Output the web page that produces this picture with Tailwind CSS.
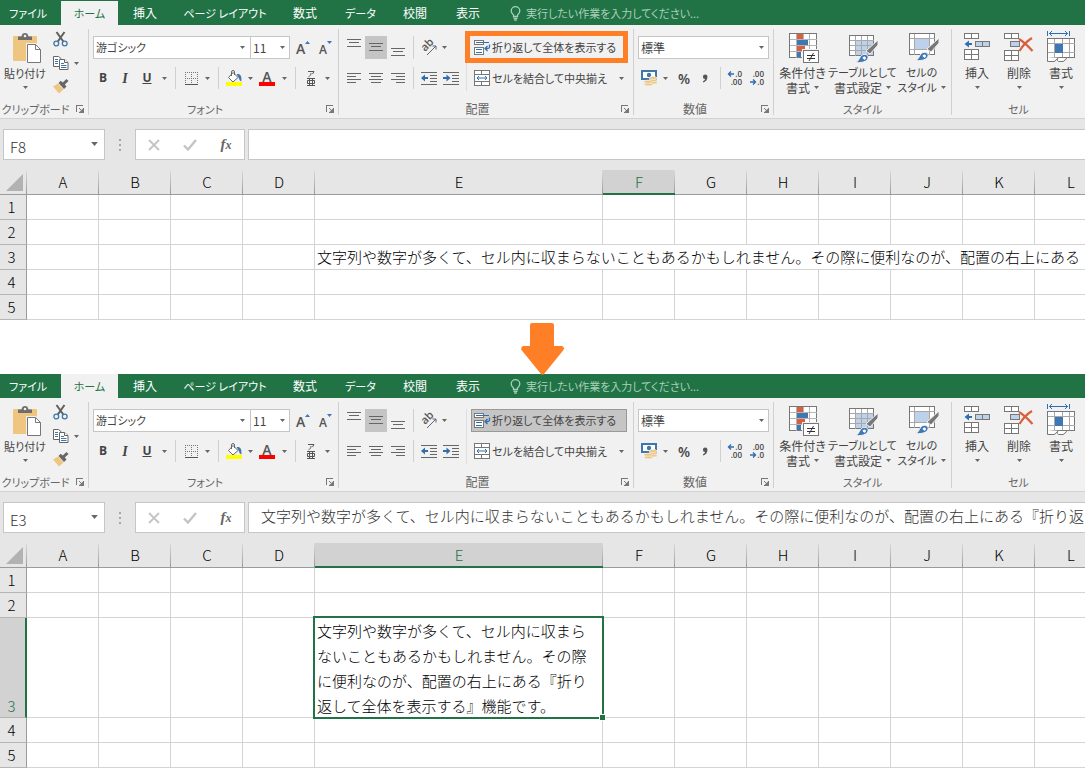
<!DOCTYPE html>
<html lang="ja">
<head>
<meta charset="utf-8">
<meta name="viewport" content="width=device-width, initial-scale=1">
<title>折り返して全体を表示する</title>
<script src="https://cdn.jsdelivr.net/npm/@tailwindcss/browser@4"></script>
</head>
<body class="bg-white overflow-x-hidden font-['Noto_Sans_CJK_JP',sans-serif] text-black">

<!-- Shared icon shapes -->
<svg class="hidden" aria-hidden="true">
  <symbol id="i-drop" viewBox="0 0 5 3"><path d="M0 0h5L2.500 3z" fill="#666"/></symbol>
  <symbol id="i-launch" viewBox="0 0 8 8"><g shape-rendering="crispEdges"><path d="M.5 7V.5H7" fill="none" stroke="#777"/><path d="M7.500 3v4.500H3" fill="none" stroke="#777"/></g><path d="M3 3l3 3" stroke="#777"/><path d="M7 3.500V7H3.500z" fill="#777"/></symbol>
</svg>

<!-- Tabs and ribbon, used by both windows -->
<template id="ribbon">
  <nav class="flex h-6 bg-[#217346] text-white text-[12px] leading-6 whitespace-nowrap [font-feature-settings:'palt'] overflow-hidden">
    <button class="w-[61px] pl-[9px] text-left text-[11px] shrink-0">ファイル</button>
    <button class="w-[57px] shrink-0 bg-[#f1f1f1] text-[#217346] text-[11px]">ホーム</button>
    <button class="w-[54px] shrink-0">挿入</button>
    <button class="w-[106px] shrink-0 text-[11px]">ページ レイアウト</button>
    <button class="w-[54px] shrink-0">数式</button>
    <button class="w-[57px] shrink-0 text-[11px]">データ</button>
    <button class="w-[52px] shrink-0">校閲</button>
    <button class="w-[54px] shrink-0">表示</button>
    <button class="flex items-center gap-[5px] pl-[15px] text-[11px] text-[#a9d0b8] shrink-0">
      <svg class="w-[11px] h-[15px]" viewBox="0 0 11 15" fill="none" stroke="#a9d0b8" stroke-width="1.300"><path d="M3.500 10.500V9C2 7.800 1.200 6.500 1.200 5a4.300 4.300 0 0 1 8.600 0c0 1.500-.8 2.800-2.300 4v1.500zM3.500 12.300h4M4.200 14h2.600"/></svg>
      <span>実行したい作業を入力してください...</span>
    </button>
  </nav>

  <div class="flex h-[94px] pt-1 bg-[#f1f1f1] border-b border-[#d2d2d2] text-[12px] text-[#444] whitespace-nowrap overflow-hidden [font-feature-settings:'palt'] [&_button]:shrink-0 [&_svg]:shrink-0 [&_svg]:overflow-visible">

    <!-- クリップボード -->
    <section class="flex flex-col w-[89px] shrink-0 border-r border-[#d0d0d0] h-[86px]">
      <div class="flex flex-1">
        <button class="flex flex-col items-center w-[50px] pt-1" aria-label="貼り付け">
          <svg class="w-[28px] h-[30px] ml-1" viewBox="0 0 28 30">
            <path d="M0 4a1 1 0 0 1 1-1h22a1 1 0 0 1 1 1v24H1a1 1 0 0 1-1-1z" fill="#eec680"/>
            <path d="M5 7V3.500h3.500C9 1 10 0 12 0s3 1 3.500 3.500H19V7z" fill="#6d6d6d"/><circle cx="12" cy="3" r="1.300" fill="#f1f1f1"/>
            <path d="M13 30V10h10l5 5" fill="#f1f1f1"/>
            <path d="M14.500 11.500h8l5 5v13h-13z" fill="#fff" stroke="#777"/><path d="M22.500 11.500v5h5" fill="none" stroke="#777"/>
          </svg>
          <span class="leading-5 text-[11px]">貼り付け</span>
          <svg class="w-[5px] h-[3px] mt-[3px]"><use href="#i-drop"/></svg>
        </button>
        <div class="flex flex-col gap-2 pt-0.5 pl-[3px]">
          <button aria-label="切り取り" class="h-4"><svg class="w-4 h-4" viewBox="0 0 16 16" fill="none"><path d="M3.500 1l6.800 9.500M11.500 1L4.800 10.500" stroke="#5f5f5f" stroke-width="2"/><circle cx="3.300" cy="12.500" r="2.400" stroke="#3f77ad" stroke-width="1.300"/><circle cx="11.700" cy="12.500" r="2.400" stroke="#3f77ad" stroke-width="1.300"/></svg></button>
          <div class="flex items-center gap-[5px] h-4">
            <button aria-label="コピー"><svg class="w-4 h-4" viewBox="0 0 16 16" fill="#fff"><path d="M.5 1.500h5l2.500 2v8H.5z" stroke="#666"/><path d="M2 4.500h3M2 6.500h3M2 8.500h3" stroke="#3f77ad"/><path d="M6.500 4.500h5l3.500 3v7H6.500z" stroke="#666"/><path d="M11.500 4.500v3H15" stroke="#666"/><path d="M8 8.500h3M8 10.500h5.500M8 12.500h5.500" stroke="#3f77ad"/></svg></button>
            <button aria-label="コピーのオプション"><svg class="w-[5px] h-[3px]"><use href="#i-drop"/></svg></button>
          </div>
          <button aria-label="書式のコピー" class="h-4"><svg class="w-4 h-4" viewBox="0 0 16 16"><path d="M0 7.500l5-3 5.500 6L6 14.500z" fill="#eec680"/><path d="M5.500 4l2.200-2.200 2 1.700L13.500 0l2 2-3.700 3.600 1.700 2L11 10z" fill="#666"/></svg></button>
        </div>
      </div>
      <footer class="flex h-3 items-center text-[#666]"><span class="w-[71px] text-center text-[11px] leading-3">クリップボード</span><button aria-label="クリップボードの設定" class="ml-[5px]"><svg class="w-2 h-2"><use href="#i-launch"/></svg></button></footer>
    </section>

    <!-- フォント -->
    <section class="flex flex-col w-[250px] shrink-0 border-r border-[#d0d0d0] h-[86px]">
      <div class="flex-1 pt-[7px]">
        <div class="flex h-[23px] pl-1">
          <div class="relative w-[158px]"><select aria-label="フォント" class="appearance-none w-full h-full bg-white border border-[#c6c6c6] pl-[2px] text-[11px]"><option>游ゴシック</option></select><svg class="absolute right-[6px] top-[10px] w-[5px] h-[3px] pointer-events-none"><use href="#i-drop"/></svg></div>
          <div class="relative w-[40px] -ml-px"><select aria-label="フォント サイズ" class="appearance-none w-full h-full bg-white border border-[#c6c6c6] pl-[2px]"><option>11</option></select><svg class="absolute right-[5px] top-[10px] w-[5px] h-[3px] pointer-events-none"><use href="#i-drop"/></svg></div>
          <button aria-label="拡大" class="ml-1.5"><svg class="w-[16px] h-[20px]" viewBox="0 0 16 20"><text x="0" y="16" font-size="14" font-weight="600" font-family="Open Sans" fill="#555">A</text><path d="M9 6h5l-2.500-3z" fill="#3f77ad"/></svg></button>
          <button aria-label="縮小" class="ml-1.5"><svg class="w-[16px] h-[20px]" viewBox="0 0 16 20"><text x="1" y="16" font-size="12" font-weight="600" font-family="Open Sans" fill="#555">A</text><path d="M9 3h5l-2.500 3z" fill="#3f77ad"/></svg></button>
        </div>
        <div class="flex items-center h-6 mt-[7px] pl-[3px] font-['Open_Sans'] text-[12px]">
          <button class="w-[22px] font-bold">B</button>
          <button class="w-[22px] font-bold italic font-['Liberation_Serif'] text-[14px]">I</button>
          <button class="w-[22px] font-bold underline">U</button>
          <button class="flex justify-center w-3" aria-label="下線の種類"><svg class="w-[5px] h-[3px]"><use href="#i-drop"/></svg></button>
          <i class="w-px h-[22px] ml-[5px] mr-1.5 bg-[#d0d0d0]"></i>
          <button class="flex justify-center w-[18px]" aria-label="罫線"><svg class="w-[13px] h-[13px]" viewBox="0 0 13 13" shape-rendering="crispEdges"><path d="M0 .5h13M0 6.500h13M.5 0v12M6.500 0v12M12.500 0v12" stroke="#777" stroke-dasharray="1 1"/><path d="M0 12.500h13" stroke="#555"/></svg></button>
          <button class="flex justify-center w-[14px]" aria-label="罫線の種類"><svg class="w-[5px] h-[3px]"><use href="#i-drop"/></svg></button>
          <i class="w-px h-[22px] ml-1 mr-1.5 bg-[#d0d0d0]"></i>
          <button class="flex justify-center w-[18px]" aria-label="塗りつぶしの色"><svg class="w-4 h-4" viewBox="0 0 16 16"><path d="M7 2.500l5 5-5 4.500L2.500 7.500z" fill="#fff" stroke="#666"/><path d="M5.500 6V2a1.500 1.500 0 0 1 3 0v3" fill="none" stroke="#666"/><path d="M10.500 4c4-.5 5.500 2 4.800 7.500-2-.5-2-3-3-4.500z" fill="#3f77ad"/><path d="M0 12h16v4H0z" fill="#ff0"/></svg></button>
          <button class="flex justify-center w-[14px]" aria-label="塗りつぶしの色の一覧"><svg class="w-[5px] h-[3px]"><use href="#i-drop"/></svg></button>
          <button class="flex justify-center w-[20px]" aria-label="フォントの色"><svg class="w-4 h-4" viewBox="0 0 16 16"><text x="8" y="12" text-anchor="middle" font-size="14" font-weight="600" font-family="Open Sans" fill="#555">A</text><path d="M0 12h16v4H0z" fill="red"/></svg></button>
          <button class="flex justify-center w-[14px]" aria-label="フォントの色の一覧"><svg class="w-[5px] h-[3px]"><use href="#i-drop"/></svg></button>
          <i class="w-px h-[22px] ml-1 mr-1.5 bg-[#d0d0d0]"></i>
          <button class="flex justify-center w-[18px]" aria-label="ふりがな"><svg class="w-[10px] h-[17px]" viewBox="0 0 10 17" fill="none" stroke="#555"><path d="M2 1.500h6L6.500 4M5 3c0 2-1 3-2.500 4M1 8.500h8M1 15.500h8M3.500 8.500v7M6.500 8.500v7M1.500 10.500v3h7v-3z"/></svg></button>
          <button class="flex justify-center w-[14px]" aria-label="ふりがなの設定"><svg class="w-[5px] h-[3px]"><use href="#i-drop"/></svg></button>
        </div>
      </div>
      <footer class="flex h-3 items-center text-[#666]"><span class="w-[232px] text-center text-[11px] leading-3">フォント</span><button aria-label="フォントの設定" class="ml-[5px]"><svg class="w-2 h-2"><use href="#i-launch"/></svg></button></footer>
    </section>

    <!-- 配置 -->
    <section class="flex flex-col w-[295px] shrink-0 border-r border-[#d0d0d0] h-[86px]">
      <div class="flex-1 flex pt-[7px]">
        <div class="w-[127px] shrink-0">
          <div class="flex h-[23px] pl-1">
            <button class="flex justify-center pt-[3px] w-[22px]" aria-label="上揃え"><svg class="w-[14px] h-[8px]" viewBox="0 0 14 8" shape-rendering="crispEdges"><path d="M0 .5h14M2 3.500h10M0 7.500h14" stroke="#666"/></svg></button>
            <button class="flex justify-center pt-[7px] w-[22px] bg-[#c5c5c5]" aria-label="上下中央揃え"><svg class="w-[14px] h-[8px]" viewBox="0 0 14 8" shape-rendering="crispEdges"><path d="M0 .5h14M2 3.500h10M0 7.500h14" stroke="#666"/></svg></button>
            <button class="flex justify-center pt-3 w-[22px]" aria-label="下揃え"><svg class="w-[14px] h-[8px]" viewBox="0 0 14 8" shape-rendering="crispEdges"><path d="M0 .5h14M2 3.500h10M0 7.500h14" stroke="#666"/></svg></button>
            <i class="w-px ml-1 mr-[5px] bg-[#d0d0d0]"></i>
            <button class="flex justify-center items-center w-[20px]" aria-label="方向"><svg class="w-[18px] h-[16px]" viewBox="0 0 18 16"><text x="0" y="0" transform="translate(5 12) rotate(-45)" font-size="11" font-weight="600" font-family="Open Sans" fill="#555">ab</text><path d="M7 15l9-9M12.500 6H16v3.500" fill="none" stroke="#666"/></svg></button>
            <button class="flex justify-center items-center w-[10px]" aria-label="方向の一覧"><svg class="w-[5px] h-[3px]"><use href="#i-drop"/></svg></button>
          </div>
          <div class="flex items-center h-6 mt-[7px] pl-1">
            <button class="flex justify-center w-[22px]" aria-label="左揃え"><svg class="w-[14px] h-[11px]" viewBox="0 0 14 11" shape-rendering="crispEdges"><path d="M0 .5h14M0 3.500h9M0 6.500h14M0 9.500h9" stroke="#666"/></svg></button>
            <button class="flex justify-center w-[22px]" aria-label="中央揃え"><svg class="w-[14px] h-[11px]" viewBox="0 0 14 11" shape-rendering="crispEdges"><path d="M0 .5h14M2 3.500h10M0 6.500h14M2 9.500h10" stroke="#666"/></svg></button>
            <button class="flex justify-center w-[22px]" aria-label="右揃え"><svg class="w-[14px] h-[11px]" viewBox="0 0 14 11" shape-rendering="crispEdges"><path d="M0 .5h14M5 3.500h9M0 6.500h14M5 9.500h9" stroke="#666"/></svg></button>
            <i class="w-px h-[22px] ml-1 mr-1 bg-[#d0d0d0]"></i>
            <button class="flex justify-center w-[22px]" aria-label="インデントを減らす"><svg class="w-4 h-[13px]" viewBox="0 0 16 13"><path d="M0 .5h16M9 3.500h7M9 6.500h7M9 9.500h7M0 12.500h16" stroke="#666" shape-rendering="crispEdges"/><path d="M7 6H2" stroke="#2f6fae" stroke-width="2"/><path d="M0 6l4-3.500v7z" fill="#2f6fae"/></svg></button>
            <button class="flex justify-center w-[22px]" aria-label="インデントを増やす"><svg class="w-4 h-[13px]" viewBox="0 0 16 13"><path d="M0 .5h16M9 3.500h7M9 6.500h7M9 9.500h7M0 12.500h16" stroke="#666" shape-rendering="crispEdges"/><path d="M0 6h5" stroke="#2f6fae" stroke-width="2"/><path d="M7.500 6l-4-3.500v7z" fill="#2f6fae"/></svg></button>
          </div>
        </div>
        <div class="flex-1 border-l border-[#dedede] h-[55px] pl-1">
          <div class="relative w-[156px]">
            <button data-wrap aria-pressed="false" class="flex items-center gap-[1px] w-full h-[23px] pl-[2px] border border-transparent text-[11px] aria-pressed:bg-[#c5c5c5] aria-pressed:border-[#999]">
              <svg class="w-[17px] h-[17px]" viewBox="0 0 17 17"><g shape-rendering="crispEdges" fill="#fff"><path d="M.5 1.500h9v4h-9zM.5 8.500h9v7h-9z" stroke="#777"/><path d="M2 3.500h13M2 10.500h6M2 13.500h6" stroke="#2f6fae"/></g><path d="M15.500 5.500v2.500q0 1.500-2 1.500H11M13.500 7l-2.500 2.500 2.500 2.500" fill="none" stroke="#2f6fae" stroke-width="1.300"/></svg>
              <span>折り返して全体を表示する</span>
            </button>
            <span data-frame class="absolute -left-1.5 -top-[5px] -right-px -bottom-1 border-[5px] border-[#ff7f27] pointer-events-none"></span>
          </div>
          <div class="flex items-center h-6 mt-[7px]">
            <button class="flex items-center gap-[2px] pl-[3px] w-[143px] text-left text-[11px]">
              <svg class="w-[16px] h-[16px]" viewBox="0 0 16 16"><path d="M.5.500h15v15H.5zM.5 4.500h15M.5 11.500h15M7.500.500v4M7.500 11.500v4" fill="#fff" stroke="#777" shape-rendering="crispEdges"/><path d="M3 8h10M5 6L3 8l2 2M11 6l2 2-2 2" fill="none" stroke="#2f6fae"/></svg>
              <span>セルを結合して中央揃え</span>
            </button>
            <button class="flex justify-center w-[14px]" aria-label="セル結合の一覧"><svg class="w-[5px] h-[3px]"><use href="#i-drop"/></svg></button>
          </div>
        </div>
      </div>
      <footer class="flex h-3 items-center text-[#666]"><span class="w-[277px] text-center leading-3">配置</span><button aria-label="配置の設定" class="ml-[5px]"><svg class="w-2 h-2"><use href="#i-launch"/></svg></button></footer>
    </section>

    <!-- 数値 -->
    <section class="flex flex-col w-[140px] shrink-0 border-r border-[#d0d0d0] h-[86px]">
      <div class="flex-1 pt-[7px]">
        <div class="relative ml-1 w-[131px] h-[23px]"><select aria-label="表示形式" class="appearance-none w-full h-full bg-white border border-[#c6c6c6] pl-[2px]"><option>標準</option></select><svg class="absolute right-[5px] top-[10px] w-[5px] h-[3px] pointer-events-none"><use href="#i-drop"/></svg></div>
        <div class="flex items-center h-6 mt-[7px] pl-[7px]">
          <button aria-label="通貨表示形式"><svg class="w-4 h-4" viewBox="0 0 16 16"><path d="M1 1h14v8H1z" fill="#fff" stroke="#3f77ad" stroke-width="2"/><path d="M0 0h4L0 4zM16 0h-4l4 4zM0 10V6l4 4z" fill="#3f77ad"/><circle cx="8" cy="5" r="2.200" fill="#3f77ad"/><g fill="#eec680" stroke="#f1f1f1" stroke-width=".6"><ellipse cx="12" cy="12.500" rx="4" ry="1.500"/><ellipse cx="12" cy="10.300" rx="4" ry="1.500"/><ellipse cx="12" cy="8" rx="4" ry="1.500"/><ellipse cx="7.500" cy="14.300" rx="4" ry="1.500"/><ellipse cx="7" cy="11.700" rx="4" ry="1.500"/></g></svg></button>
          <button class="flex justify-center w-[17px]" aria-label="通貨の一覧"><svg class="w-[5px] h-[3px]"><use href="#i-drop"/></svg></button>
          <button class="w-[20px] font-['Open_Sans'] font-semibold text-[14px]">%</button>
          <button class="flex justify-center w-[22px]" aria-label="桁区切り"><svg class="w-[6px] h-[9px]" viewBox="0 0 6 9"><path d="M5.500 2.500C5.500 6 3.500 8 1 8.500V7.300c1.200-.5 2-1.300 2-2.300A2.300 2.300 0 1 1 5.500 2.500z" fill="#555"/></svg></button>
          <i class="w-px h-[22px] ml-1 mr-[3px] bg-[#d0d0d0]"></i>
          <button class="w-[22px] flex justify-center" aria-label="小数点以下の表示桁数を増やす"><svg class="w-4 h-4" viewBox="0 0 16 16" font-family="Open Sans" font-size="8" font-weight="600" fill="#444"><text x="15" y="7" text-anchor="end">.0</text><text x="15" y="15" text-anchor="end">.00</text><path d="M7 4H1.500M4 1.500L1.500 4 4 6.500" fill="none" stroke="#2f6fae" stroke-width="1.400"/></svg></button>
          <button class="w-[22px] flex justify-center" aria-label="小数点以下の表示桁数を減らす"><svg class="w-4 h-4" viewBox="0 0 16 16" font-family="Open Sans" font-size="8" font-weight="600" fill="#444"><text x="15" y="7" text-anchor="end">.00</text><text x="15" y="15" text-anchor="end">.0</text><path d="M1 12h5.500M4 9.500L6.500 12 4 14.500" fill="none" stroke="#2f6fae" stroke-width="1.400"/></svg></button>
        </div>
      </div>
      <footer class="flex h-3 items-center text-[#666]"><span class="w-[122px] text-center leading-3">数値</span><button aria-label="数値の設定" class="ml-[5px]"><svg class="w-2 h-2"><use href="#i-launch"/></svg></button></footer>
    </section>

    <!-- スタイル -->
    <section class="flex flex-col w-[178px] shrink-0 border-r border-[#d0d0d0] h-[86px]">
      <div class="flex-1 flex leading-[15px]">
        <button class="flex flex-col items-center w-[57px] pt-1">
          <svg class="w-[30px] h-[30px] mb-0.5 ml-0.5" viewBox="0 0 30 30" shape-rendering="crispEdges"><path d="M.5.500h27v24H.5z" fill="#fff" stroke="#777"/><path d="M.5 6.500h27M.5 12.500h27M.5 18.500h27M7.500.500v24M20.500.500v24M14.500.500v24" stroke="#b5b5b5"/><path d="M8 1h6v5H8zM8 13h8v5H8z" fill="#d8603c"/><path d="M8 7h11v5H8zM8 19h4v5H8z" fill="#3f77b4"/><path d="M13 16h17v14H13z" fill="#f1f1f1"/><path d="M14.500 17.500h15v12h-15z" fill="#fff" stroke="#777"/><path d="M18 22.500h8M18 25.500h8M20 28l4.500-8" fill="none" stroke="#333" shape-rendering="auto"/></svg>
          <span>条件付き</span><span class="flex items-center gap-1">書式<svg class="w-[5px] h-[3px]"><use href="#i-drop"/></svg></span>
        </button>
        <button class="flex flex-col items-center w-[63px] pt-1">
          <svg class="w-[30px] h-[30px] mb-0.5" viewBox="0 0 30 30"><g shape-rendering="crispEdges"><path d="M1.500 2.500h24v20h-24z" fill="#fff"/><path d="M8 8h18v15H8z" fill="#bdd1ea"/><path d="M1.500 2.500h24v20h-24z" fill="none" stroke="#777"/><path d="M2 7.500h24M2 12.500h24M2 17.500h24M7.500 3v20M13.500 3v20M19.500 3v20" stroke="#a8a8a8"/></g><path d="M30 7v5l-8 9-4-3z" fill="#777" stroke="#f1f1f1"/><path d="M7 29.500c4-1 3.500-3.500 6-6.500 2-2.500 6-2 7 .5 1 3.500-4 7-13 6z" fill="#3f77b4" stroke="#f1f1f1"/><path d="M14.500 25c1-2 3-2 3.500 0-.5 1.500-1.500 2-2 1.500z" fill="#fff"/></svg>
          <span class="text-[11px]">テーブルとして</span><span class="flex items-center gap-1">書式設定<svg class="w-[5px] h-[3px]"><use href="#i-drop"/></svg></span>
        </button>
        <button class="flex flex-col items-center w-[55px] pt-1">
          <svg class="w-[30px] h-[30px] mb-0.5 ml-1" viewBox="0 0 30 30"><g shape-rendering="crispEdges"><path d="M.5.500h25v21H.5z" fill="#fff" stroke="#777"/><path d="M1 5.500h25M1 16.500h25M5.500 1v21M20.500 1v21" stroke="#a8a8a8"/><path d="M6 6h14v10H6z" fill="#bdd1ea"/></g><path d="M30 5v5l-8 9-4-3z" fill="#777" stroke="#f1f1f1"/><path d="M6 27.500c4-1 3.500-3.500 6-6.500 2-2.500 6-2 7 .5 1 3.500-4 7-13 6z" fill="#3f77b4" stroke="#f1f1f1"/><path d="M13.500 23c1-2 3-2 3.500 0-.5 1.500-1.500 2-2 1.500z" fill="#fff"/></svg>
          <span class="text-[11px]">セルの</span><span class="flex items-center gap-1 text-[11px]">スタイル<svg class="w-[5px] h-[3px]"><use href="#i-drop"/></svg></span>
        </button>
      </div>
      <footer class="h-3 text-center text-[11px] leading-3 text-[#666]">スタイル</footer>
    </section>

    <!-- セル -->
    <section class="flex flex-col w-[133px] shrink-0 h-[86px]">
      <div class="flex-1 flex pl-1 leading-[15px]">
        <button class="flex flex-col items-center w-[42px] pt-1">
          <svg class="w-[26px] h-[28px] mb-1" viewBox="0 0 26 28"><g shape-rendering="crispEdges" fill="#fff" stroke="#777"><path d="M.5.500h14v5H.5zM7.500.500v5M.5 16.500h14v10H.5zM.5 21.500h14M7.500 16.500v10"/><path d="M11.500 8.500h14v5h-14zM18.500 8.500v5" fill="#bdd1ea"/></g><path d="M8 11H3" stroke="#2f6fae" stroke-width="2"/><path d="M.5 11L5 7.500v7z" fill="#2f6fae"/></svg>
          <span>挿入</span><svg class="w-[5px] h-[3px] mt-1.5"><use href="#i-drop"/></svg>
        </button>
        <button class="flex flex-col items-center w-[42px] pt-1">
          <svg class="w-[30px] h-[28px] mb-1" viewBox="0 0 30 28"><g shape-rendering="crispEdges" fill="#fff" stroke="#777"><path d="M.5.500h14v5H.5zM7.500.500v5M.5 17.500h14v10H.5zM.5 22.500h14M7.500 17.500v10"/><path d="M6.500 8.500h9v5h-9z" fill="#bdd1ea"/></g><path d="M15 6c5 3 9 7 13.500 12M28 5c-5 3-9 7-12.500 13" fill="none" stroke="#d8603c" stroke-width="2.200"/></svg>
          <span>削除</span><svg class="w-[5px] h-[3px] mt-1.5"><use href="#i-drop"/></svg>
        </button>
        <button class="flex flex-col items-center w-[42px] pt-0.5">
          <svg class="w-[28px] h-[31px] mb-[3px]" viewBox="0 0 28 31"><path d="M.5 0v5M22.500 0v5M2 2.500h19M5 0L2.500 2.500 5 5M18 0l2.500 2.500L18 5" fill="none" stroke="#2f6fae"/><g shape-rendering="crispEdges"><path d="M.5 7.500h27v19H.5z" fill="#fff" stroke="#777"/><path d="M1 12.500h27M1 21.500h27M7.500 8v18M15.500 8v18M22.500 8v18" stroke="#a8a8a8"/><path d="M8 13h8v9H8z" fill="#3f77b4"/></g><path d="M.5 26v4.500H7c2 0 2-3 4-3-1 0-1 3 1 3h4c2 0 2-3 4-3" fill="#fff" stroke="#777"/></svg>
          <span>書式</span><svg class="w-[5px] h-[3px] mt-1.5"><use href="#i-drop"/></svg>
        </button>
      </div>
      <footer class="h-3 text-center text-[11px] leading-3 text-[#666]">セル</footer>
    </section>
  </div>
</template>

<!-- Formula bar controls, used by both windows -->
<template id="fx">
  <svg class="w-[2px] h-3 mx-[14px] shrink-0 self-center" viewBox="0 0 2 12"><path d="M0 0h2v2H0zM0 5h2v2H0zM0 10h2v2H0z" fill="#a6a6a6"/></svg>
  <div class="flex items-center w-[110px] shrink-0 bg-white border border-[#c6c6c6]">
    <button class="flex justify-center w-9" aria-label="キャンセル"><svg class="w-3 h-3" viewBox="0 0 12 12"><path d="M1 1l10 10M11 1L1 11" stroke="#c4c4c4" stroke-width="1.800"/></svg></button>
    <button class="flex justify-center w-9" aria-label="入力"><svg class="w-[14px] h-3" viewBox="0 0 14 12"><path d="M1 6.500l4 4L13 1" fill="none" stroke="#c4c4c4" stroke-width="2.400"/></svg></button>
    <button class="w-9 font-['Liberation_Serif'] font-bold italic text-[15px] leading-5 text-[#666]" aria-label="関数の挿入">f<span class="text-[12px]">x</span></button>
  </div>
</template>

<main>
  <section class="bg-[#e6e6e6]">
    <div class="bg-[#217346] pt-px" data-ribbon="off"></div>
    <div class="flex h-[51px] py-[10px] pl-[3px] overflow-hidden" data-fx>
      <div class="relative w-[102px] shrink-0"><input aria-label="名前ボックス" value="F8" class="w-full h-full bg-white border border-[#c6c6c6] pl-[6px] pt-[3px] text-[15px] font-light text-[#333]"><svg class="absolute right-[7px] top-[13px] w-[7px] h-[4px]"><use href="#i-drop"/></svg></div>
      <input data-formula aria-label="数式バー" class="flex-1 min-w-0 ml-[3px] bg-white border border-r-0 border-[#c6c6c6] pl-3 text-[15px] font-light text-[#333]">
    </div>
    <div class="overflow-hidden">
      <table class="table-fixed w-[1107px] border-separate border-spacing-0 bg-white text-[15px] font-light leading-6 [&_td]:border-r [&_td]:border-b [&_td]:border-[#d4d4d4] [&_td]:p-0 [&_td]:h-[25px] [&_th]:p-0 [&_th]:h-[25px] [&_th]:text-[15px] [&_th]:leading-[22px] [&_th]:font-light [&_th]:bg-[#e6e6e6] [&_th]:border-[#9b9b9b] [&_thead_th]:border-b [&_thead_th]:bg-[linear-gradient(#dcdcdc,#999)] [&_thead_th]:bg-[length:1px_100%] [&_thead_th]:bg-right [&_thead_th]:bg-no-repeat [&_tbody_th]:border-r [&_tbody_th]:border-b [&_tbody_th]:pr-[3px] [&_tbody_th]:border-b-[#b5b5b5]">
        <colgroup><col class="w-[27px]"><col class="w-[72px]"><col class="w-[72px]"><col class="w-[72px]"><col class="w-[72px]"><col class="w-[288px]"><col class="w-[72px]"><col class="w-[72px]"><col class="w-[72px]"><col class="w-[72px]"><col class="w-[72px]"><col class="w-[72px]"><col class="w-[72px]"></colgroup>
        <thead><tr><th aria-label="すべて選択"><svg class="w-[17px] h-[17px] ml-[6px]" viewBox="0 0 17 17"><path d="M17 0v17H0z" fill="#b2b2b2"/></svg></th><th>A</th><th>B</th><th>C</th><th>D</th><th>E</th><th class="bg-[#d2d2d2]! border-b-2! border-[#217346]! text-[#217346]">F</th><th>G</th><th>H</th><th>I</th><th>J</th><th>K</th><th>L</th></tr></thead>
        <tbody>
          <tr><th>1</th><td></td><td></td><td></td><td></td><td></td><td></td><td></td><td></td><td></td><td></td><td></td><td></td></tr>
          <tr><th>2</th><td></td><td></td><td></td><td></td><td></td><td></td><td></td><td></td><td></td><td></td><td></td><td></td></tr>
          <tr><th>3</th><td></td><td></td><td></td><td></td><td colspan="8" class="pl-[2px]! overflow-hidden whitespace-nowrap">文字列や数字が多くて、セル内に収まらないこともあるかもしれません。その際に便利なのが、配置の右上にある『折り返して全体を表示する』機能です。</td></tr>
          <tr><th>4</th><td></td><td></td><td></td><td></td><td></td><td></td><td></td><td></td><td></td><td></td><td></td><td></td></tr>
          <tr><th>5</th><td></td><td></td><td></td><td></td><td></td><td></td><td></td><td></td><td></td><td></td><td></td><td></td></tr>
        </tbody>
      </table>
    </div>
  </section>

  <div class="relative z-10 flex justify-center h-[54px] pt-[3px]">
    <svg class="w-[43px] h-[52px] shrink-0" viewBox="0 0 43 52"><path d="M11 0h20a2 2 0 0 1 2 2v21h8q3 1 1.500 4L23 51q-1.500 1.500-3 0L.5 27Q-.5 24 2 23h7V2a2 2 0 0 1 2-2z" fill="#ff7f27"/></svg>
  </div>

  <section class="bg-[#e6e6e6]">
    <div data-ribbon="on"></div>
    <div class="flex h-[51px] py-[10px] pl-[3px] overflow-hidden" data-fx>
      <div class="relative w-[102px] shrink-0"><input aria-label="名前ボックス" value="E3" class="w-full h-full bg-white border border-[#c6c6c6] pl-[6px] pt-[3px] text-[15px] font-light text-[#333]"><svg class="absolute right-[7px] top-[13px] w-[7px] h-[4px]"><use href="#i-drop"/></svg></div>
      <input data-formula aria-label="数式バー" value="文字列や数字が多くて、セル内に収まらないこともあるかもしれません。その際に便利なのが、配置の右上にある『折り返して全体を表示する』機能です。" class="flex-1 min-w-0 ml-[3px] bg-white border border-r-0 border-[#c6c6c6] pl-3 pb-[3px] text-[15px] font-light text-[#333]">
    </div>
    <div class="overflow-hidden">
      <table class="table-fixed w-[1107px] border-separate border-spacing-0 bg-white text-[15px] font-light leading-6 [&_td]:border-r [&_td]:border-b [&_td]:border-[#d4d4d4] [&_td]:p-0 [&_td]:h-[25px] [&_th]:p-0 [&_th]:h-[25px] [&_th]:text-[15px] [&_th]:leading-[22px] [&_th]:font-light [&_th]:bg-[#e6e6e6] [&_th]:border-[#9b9b9b] [&_thead_th]:border-b [&_thead_th]:bg-[linear-gradient(#dcdcdc,#999)] [&_thead_th]:bg-[length:1px_100%] [&_thead_th]:bg-right [&_thead_th]:bg-no-repeat [&_tbody_th]:border-r [&_tbody_th]:border-b [&_tbody_th]:pr-[3px] [&_tbody_th]:border-b-[#b5b5b5]">
        <colgroup><col class="w-[27px]"><col class="w-[72px]"><col class="w-[72px]"><col class="w-[72px]"><col class="w-[72px]"><col class="w-[288px]"><col class="w-[72px]"><col class="w-[72px]"><col class="w-[72px]"><col class="w-[72px]"><col class="w-[72px]"><col class="w-[72px]"><col class="w-[72px]"></colgroup>
        <thead><tr><th aria-label="すべて選択"><svg class="w-[17px] h-[17px] ml-[6px]" viewBox="0 0 17 17"><path d="M17 0v17H0z" fill="#b2b2b2"/></svg></th><th>A</th><th>B</th><th>C</th><th>D</th><th class="bg-[#d2d2d2]! border-b-2! border-[#217346]! text-[#217346]">E</th><th>F</th><th>G</th><th>H</th><th>I</th><th>J</th><th>K</th><th>L</th></tr></thead>
        <tbody>
          <tr><th>1</th><td></td><td></td><td></td><td></td><td></td><td></td><td></td><td></td><td></td><td></td><td></td><td></td></tr>
          <tr><th>2</th><td></td><td></td><td></td><td></td><td></td><td></td><td></td><td></td><td></td><td></td><td></td><td></td></tr>
          <tr><th class="align-bottom bg-[#d2d2d2]! border-r-2! border-r-[#217346]! text-[#217346] pr-[2px]!">3</th><td></td><td></td><td></td><td></td><td class="relative"><div class="h-[99px] pl-[2px] pr-2 leading-[25px]">文字列や数字が多くて、セル内に収まらないこともあるかもしれません。その際に便利なのが、配置の右上にある『折り返して全体を表示する』機能です。</div><span class="absolute -left-0.5 -top-0.5 -right-0.5 -bottom-0.5 border-2 border-[#217346]"></span><span class="absolute -right-1 -bottom-1 size-[7px] border border-white bg-[#217346]"></span></td><td></td><td></td><td></td><td></td><td></td><td></td><td></td></tr>
          <tr><th>4</th><td></td><td></td><td></td><td></td><td></td><td></td><td></td><td></td><td></td><td></td><td></td><td></td></tr>
          <tr><th>5</th><td></td><td></td><td></td><td></td><td></td><td></td><td></td><td></td><td></td><td></td><td></td><td></td></tr>
        </tbody>
      </table>
    </div>
  </section>
</main>

<script>
  const ribbon = document.getElementById('ribbon');
  for (const host of document.querySelectorAll('[data-ribbon]')) {
    host.append(ribbon.content.cloneNode(true));
    if (host.dataset.ribbon === 'on') {
      host.querySelector('[data-wrap]').setAttribute('aria-pressed', 'true');
      host.querySelector('[data-frame]').remove();
    }
  }
  const fx = document.getElementById('fx');
  for (const bar of document.querySelectorAll('[data-fx]')) {
    bar.querySelector('[data-formula]').before(fx.content.cloneNode(true));
  }
</script>
</body>
</html>
